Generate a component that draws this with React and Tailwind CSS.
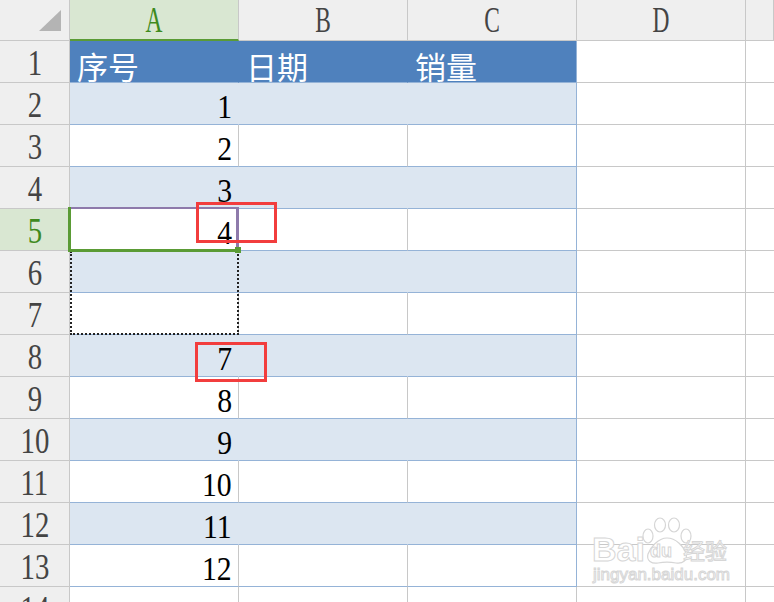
import React from "react";

const values = { 2: "1", 3: "2", 4: "3", 5: "4", 8: "7", 9: "8", 10: "9", 11: "10", 12: "11", 13: "12" };
const heads = ["序号", "日期", "销量"];

function TableCell({ r, c }) {
  let cls = "h-[42px] w-[169px] shrink-0 border-b flex items-center ";
  if (r === 1) {
    cls += "bg-[#4f81bd] border-b-[#95b3d7] " + (c < 2 ? "border-r border-r-[#4f81bd]" : "border-r border-r-[#95b3d7]");
    return (
      <div className={cls}>
        <span className="pl-[7px] pt-[7px] text-[31px] leading-none text-white" style={{ fontFamily: '"Noto Sans CJK SC", sans-serif' }}>
          {heads[c]}
        </span>
      </div>
    );
  }
  if (r % 2 === 0) {
    cls += "bg-[#dce6f1] border-b-[#95b3d7] " + (c < 2 ? "border-r border-r-[#dce6f1]" : "border-r border-r-[#95b3d7]");
  } else {
    cls += "bg-white border-b-[#95b3d7] " + (c < 2 ? "border-r border-r-[#c8c8c8]" : "border-r border-r-[#95b3d7]");
  }
  return (
    <div className={cls + " justify-end"}>
      {c === 0 && values[r] ? (
        <span className="pr-[7px] pt-[7px] text-[33px] leading-none text-black inline-block scale-x-90 origin-right" style={{ fontFamily: '"Liberation Serif", serif' }}>
          {values[r]}
        </span>
      ) : null}
    </div>
  );
}

function PlainCell({ last }) {
  return <div className={(last ? "flex-1 min-w-[169px] " : "w-[169px] ") + "h-[42px] shrink-0 bg-white border-r border-b border-[#c8c8c8]"} />;
}

function Row({ r }) {
  const active = r === 5;
  return (
    <div className="flex h-[42px]">
      <div className={"w-[70px] shrink-0 h-[42px] border-r border-b border-[#c8c8c8] flex items-center justify-center " + (active ? "bg-[#d9e7d2]" : "bg-[#efefef]")}>
        <span className={"pt-[2px] text-[36px] leading-none inline-block scale-x-80 " + (active ? "text-[#3f8a1e]" : "text-[#444444]")} style={{ fontFamily: '"Liberation Serif", serif' }}>
          {r}
        </span>
      </div>
      {[0, 1, 2].map((c) => (r <= 13 ? <TableCell key={c} r={r} c={c} /> : <PlainCell key={c} />))}
      <PlainCell />
      <PlainCell last />
    </div>
  );
}

function Watermark() {
  return (
    <div className="absolute left-[590px] top-[514px] w-[150px] h-[80px] pointer-events-none">
      <span className="absolute left-[2px] top-[18px] text-[34px] font-bold leading-none text-white [-webkit-text-stroke:1px_#d6d6d6]" style={{ fontFamily: '"Liberation Sans", sans-serif' }}>
        Bai
      </span>
      <svg className="absolute left-[48px] top-[2px]" width="62" height="50" viewBox="0 0 62 50" fill="white" stroke="#d6d6d6" strokeWidth="1.2">
        <ellipse cx="10" cy="20" rx="5" ry="7" />
        <ellipse cx="22" cy="9" rx="5.5" ry="7" />
        <ellipse cx="36" cy="9" rx="5.5" ry="7" />
        <ellipse cx="48" cy="20" rx="5" ry="7" />
        <path d="M29 22 C20 22 12 32 10 38 C8 45 14 48 20 47 C25 46 33 46 38 47 C45 48 50 44 48 37 C46 31 38 22 29 22 Z" />
      </svg>
      <span className="absolute left-[60px] top-[28px] text-[18px] font-bold leading-none text-white [-webkit-text-stroke:1px_#d6d6d6]" style={{ fontFamily: '"Liberation Sans", sans-serif' }}>
        du
      </span>
      <span className="absolute left-[93px] top-[24px] text-[22px] leading-none text-white [-webkit-text-stroke:1px_#d6d6d6]" style={{ fontFamily: '"Noto Sans CJK SC", sans-serif' }}>
        经验
      </span>
      <span className="absolute left-[3px] top-[52px] text-[17px] leading-none text-white [-webkit-text-stroke:1px_#d6d6d6]" style={{ fontFamily: '"Liberation Sans", sans-serif' }}>
        jingyan.baidu.com
      </span>
    </div>
  );
}

export default function App() {
  const rows = Array.from({ length: 14 }, (_, i) => i + 1);
  const colLetters = ["A", "B", "C", "D"];
  return (
    <div className="relative w-[774px] h-[602px] overflow-hidden bg-white">
      <div className="flex flex-col">
        <div className="flex h-[41px]">
          <div className="w-[70px] shrink-0 h-[41px] bg-[#efefef] border-r border-b border-[#c8c8c8] relative">
            <svg className="absolute left-[39px] top-[10px]" width="22" height="21" viewBox="0 0 22 21">
              <polygon points="0,21 22,21 22,0" fill="#b4b4b4" />
            </svg>
          </div>
          {colLetters.map((l, i) => (
            <div
              key={l}
              className={
                "w-[169px] shrink-0 h-[41px] border-r border-[#c8c8c8] flex justify-center items-center " +
                (i === 0 ? "bg-[#d9e7d2] border-b-2 border-b-[#5a9b35]" : "bg-[#efefef] border-b")
              }
            >
              <span className={"text-[36px] leading-none inline-block scale-x-65 " + (i === 0 ? "text-[#3f8a1e]" : "text-[#444444]")} style={{ fontFamily: '"Liberation Serif", serif' }}>
                {l}
              </span>
            </div>
          ))}
          <div className="flex-1 h-[41px] bg-[#efefef] border-r border-b border-[#c8c8c8]" />
        </div>
        {rows.map((r) => (
          <Row key={r} r={r} />
        ))}
      </div>

      {/* marching ants around A5:A7 */}
      <div className="absolute left-[70px] top-[251px] w-[169px] h-[84px] border-l-2 border-r-2 border-b-2 border-dotted border-[#222222]" />

      {/* active cell A5 */}
      <div className="absolute left-[71px] top-[207px] w-[168px] h-[2px] bg-[#8e7aab]" />
      <div className="absolute left-[236px] top-[207px] w-[3px] h-[42px] bg-[#8e7aab]" />
      <div className="absolute left-[68px] top-[207px] w-[3px] h-[45px] bg-[#5a9b35]" />
      <div className="absolute left-[68px] top-[249px] w-[169px] h-[3px] bg-[#5a9b35]" />
      <div className="absolute left-[235px] top-[247px] w-[6px] h-[6px] bg-[#5a9b35]" />

      {/* red annotation boxes */}
      <div className="absolute left-[196px] top-[202px] w-[81px] h-[41px] border-[3px] border-[#f23d3d]" />
      <div className="absolute left-[195px] top-[342px] w-[72px] h-[40px] border-[3px] border-[#f23d3d]" />

      <Watermark />
    </div>
  );
}
